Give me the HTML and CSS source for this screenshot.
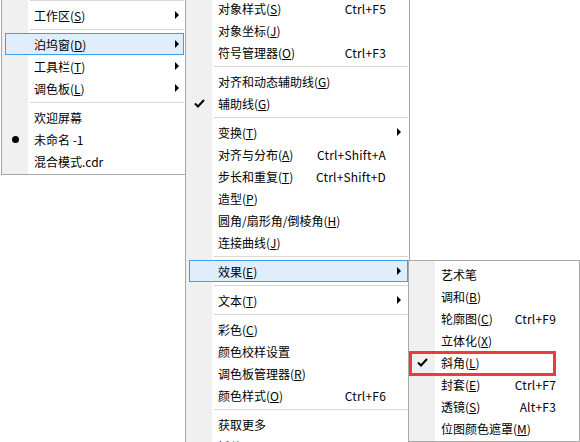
FILE: index.html
```html
<!DOCTYPE html>
<html>
<head>
  <title>窗口菜单</title>
  <link rel="stylesheet" href="styles.css">
</head>
<body>
  <div class="desk">
    <!-- 窗口 menu -->
    <div class="menu menu-main">
      <div class="sep"></div>
      <div class="item"><span class="mark"></span><span class="label">工作区(<u>S</u>)</span><span class="sub"></span></div>
      <div class="sep"></div>
      <div class="item active"><span class="mark"></span><span class="label">泊坞窗(<u>D</u>)</span><span class="sub"></span></div>
      <div class="item"><span class="mark"></span><span class="label">工具栏(<u>T</u>)</span><span class="sub"></span></div>
      <div class="item"><span class="mark"></span><span class="label">调色板(<u>L</u>)</span><span class="sub"></span></div>
      <div class="sep"></div>
      <div class="item"><span class="mark"></span><span class="label">欢迎屏幕</span></div>
      <div class="item"><span class="mark"><span class="dot"></span></span><span class="label">未命名 -1</span></div>
      <div class="item"><span class="mark"></span><span class="label">混合模式.cdr</span></div>
    </div>

    <!-- 泊坞窗 submenu -->
    <div class="menu menu-dock">
      <div class="item"><span class="mark"></span><span class="label">对象样式(<u>S</u>)</span><span class="key">Ctrl+F5</span></div>
      <div class="item"><span class="mark"></span><span class="label">对象坐标(<u>J</u>)</span></div>
      <div class="item"><span class="mark"></span><span class="label">符号管理器(<u>O</u>)</span><span class="key">Ctrl+F3</span></div>
      <div class="sep"></div>
      <div class="item"><span class="mark"></span><span class="label">对齐和动态辅助线(<u>G</u>)</span></div>
      <div class="item"><span class="mark"><svg class="check" width="11" height="9" viewBox="0 0 11 9"><polyline points="1,4.5 4,7.5 10,1" fill="none" stroke="#000" stroke-width="2"/></svg></span><span class="label">辅助线(<u>G</u>)</span></div>
      <div class="sep"></div>
      <div class="item"><span class="mark"></span><span class="label">变换(<u>T</u>)</span><span class="sub"></span></div>
      <div class="item"><span class="mark"></span><span class="label">对齐与分布(<u>A</u>)</span><span class="key">Ctrl+Shift+A</span></div>
      <div class="item"><span class="mark"></span><span class="label">步长和重复(<u>T</u>)</span><span class="key">Ctrl+Shift+D</span></div>
      <div class="item"><span class="mark"></span><span class="label">造型(<u>P</u>)</span></div>
      <div class="item"><span class="mark"></span><span class="label">圆角/扇形角/倒棱角(<u>H</u>)</span></div>
      <div class="item"><span class="mark"></span><span class="label">连接曲线(<u>J</u>)</span></div>
      <div class="sep"></div>
      <div class="item active"><span class="mark"></span><span class="label">效果(<u>E</u>)</span><span class="sub"></span></div>
      <div class="sep"></div>
      <div class="item"><span class="mark"></span><span class="label">文本(<u>T</u>)</span><span class="sub"></span></div>
      <div class="sep"></div>
      <div class="item"><span class="mark"></span><span class="label">彩色(<u>C</u>)</span></div>
      <div class="item"><span class="mark"></span><span class="label">颜色校样设置</span></div>
      <div class="item"><span class="mark"></span><span class="label">调色板管理器(<u>R</u>)</span></div>
      <div class="item"><span class="mark"></span><span class="label">颜色样式(<u>O</u>)</span><span class="key">Ctrl+F6</span></div>
      <div class="sep"></div>
      <div class="item"><span class="mark"></span><span class="label">获取更多</span></div>
      <div class="item"><span class="mark"></span><span class="label">插件</span></div>
    </div>

    <!-- 效果 submenu -->
    <div class="menu menu-effects">
      <div class="item"><span class="mark"></span><span class="label">艺术笔</span></div>
      <div class="item"><span class="mark"></span><span class="label">调和(<u>B</u>)</span></div>
      <div class="item"><span class="mark"></span><span class="label">轮廓图(<u>C</u>)</span><span class="key">Ctrl+F9</span></div>
      <div class="item"><span class="mark"></span><span class="label">立体化(<u>X</u>)</span></div>
      <div class="item marked"><span class="mark"><svg class="check" width="11" height="9" viewBox="0 0 11 9"><polyline points="1,4.5 4,7.5 10,1" fill="none" stroke="#000" stroke-width="2"/></svg></span><span class="label">斜角(<u>L</u>)</span></div>
      <div class="item"><span class="mark"></span><span class="label">封套(<u>E</u>)</span><span class="key">Ctrl+F7</span></div>
      <div class="item"><span class="mark"></span><span class="label">透镜(<u>S</u>)</span><span class="key">Alt+F3</span></div>
      <div class="item"><span class="mark"></span><span class="label">位图颜色遮罩(<u>M</u>)</span></div>
    </div>
  </div>
</body>
</html>
```

FILE: styles.css
```css
body {
  margin: 0;
  background-color: #ffffff;
  font-family: "Noto Sans CJK SC", "Noto Sans", sans-serif;
  font-size: 12px;
  color: #000;
  overflow: hidden;
}
.desk {
  display: flex;
  align-items: flex-start;
  margin-top: -6px;
}

/* Menu boxes */
.menu {
  box-sizing: border-box;
  border: 1px solid #a8a8a8;
  padding: 2px 1px 2px 3px;
  background: linear-gradient(to right, #f0f0f0 26px, #ffffff 26px);
  flex: none;
}
.menu-main {
  width: 185px;
  margin-left: 1px;
}
.menu-dock {
  width: 225px;
  margin-left: -1px;
}
.menu-effects {
  width: 172px;
  margin-left: -2px;
  margin-top: 266px;
  position: relative;
  z-index: 1;
}

.sep {
  height: 1px;
  background-color: #d7d7d7;
  margin: 3px 0 3px 25px;
}

.item {
  box-sizing: border-box;
  height: 22px;
  display: flex;
  align-items: center;
  white-space: nowrap;
  border: 1px solid transparent;
}
.item.active {
  background-color: #e0eefc;
  border-color: #3aa2ec;
}
.item u {
  text-decoration: underline;
  text-underline-offset: 1px;
}
.mark {
  width: 20px;
  margin-left: -1px;
  display: flex;
  justify-content: center;
  align-items: center;
  flex: none;
}
.label {
  margin-left: 9px;
}
.key {
  margin-left: auto;
  margin-right: 21px;
  letter-spacing: 0.2px;
}
.sub {
  margin-left: auto;
  margin-right: 6px;
  width: 0;
  height: 0;
  border-left: 4px solid #000;
  border-top: 4px solid transparent;
  border-bottom: 4px solid transparent;
}
.menu-main .sub {
  margin-right: 4px;
}
.dot {
  width: 7px;
  height: 7px;
  border-radius: 50%;
  background-color: #000;
}

/* annotation box around the checked item */
.marked {
  position: relative;
}
.marked::after {
  content: "";
  position: absolute;
  left: -4px;
  top: -1px;
  width: 147px;
  height: 25px;
  box-sizing: border-box;
  border: 3px solid #ec3b3b;
}
```
